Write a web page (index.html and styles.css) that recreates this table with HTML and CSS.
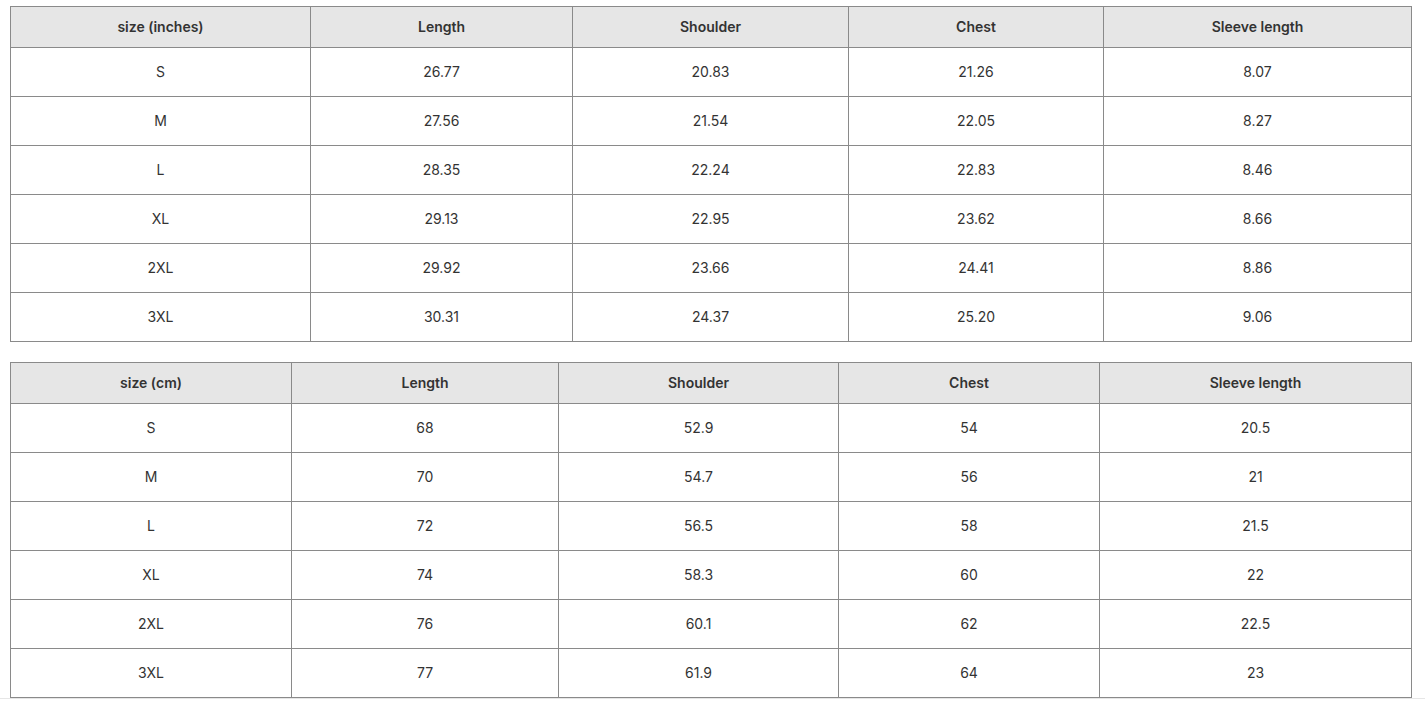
FILE: index.html
```html
<!DOCTYPE html>
<html>
<head>
<meta charset="utf-8">
<link rel="stylesheet" href="styles.css">
</head>
<body>
<div class="page">
  <table class="size-table">
    <colgroup>
      <col class="c1"><col class="c2"><col class="c3"><col class="c4"><col class="c5">
    </colgroup>
    <thead>
      <tr><th>size (inches)</th><th>Length</th><th>Shoulder</th><th>Chest</th><th>Sleeve length</th></tr>
    </thead>
    <tbody>
      <tr><td>S</td><td>26.77</td><td>20.83</td><td>21.26</td><td>8.07</td></tr>
      <tr><td>M</td><td>27.56</td><td>21.54</td><td>22.05</td><td>8.27</td></tr>
      <tr><td>L</td><td>28.35</td><td>22.24</td><td>22.83</td><td>8.46</td></tr>
      <tr><td>XL</td><td>29.13</td><td>22.95</td><td>23.62</td><td>8.66</td></tr>
      <tr><td>2XL</td><td>29.92</td><td>23.66</td><td>24.41</td><td>8.86</td></tr>
      <tr><td>3XL</td><td>30.31</td><td>24.37</td><td>25.20</td><td>9.06</td></tr>
    </tbody>
  </table>
  <table class="size-table cm">
    <colgroup>
      <col class="c1"><col class="c2"><col class="c3"><col class="c4"><col class="c5">
    </colgroup>
    <thead>
      <tr><th>size (cm)</th><th>Length</th><th>Shoulder</th><th>Chest</th><th>Sleeve length</th></tr>
    </thead>
    <tbody>
      <tr><td>S</td><td>68</td><td>52.9</td><td>54</td><td>20.5</td></tr>
      <tr><td>M</td><td>70</td><td>54.7</td><td>56</td><td>21</td></tr>
      <tr><td>L</td><td>72</td><td>56.5</td><td>58</td><td>21.5</td></tr>
      <tr><td>XL</td><td>74</td><td>58.3</td><td>60</td><td>22</td></tr>
      <tr><td>2XL</td><td>76</td><td>60.1</td><td>62</td><td>22.5</td></tr>
      <tr><td>3XL</td><td>77</td><td>61.9</td><td>64</td><td>23</td></tr>
    </tbody>
  </table>
</div>
</body>
</html>
```
FILE: styles.css
```css
html, body {
  margin: 0;
  padding: 0;
  background: #ffffff;
}
.page {
  padding: 6px 0 0 10px;
  display: flex;
  flex-direction: column;
  gap: 20px;
  align-items: flex-start;
  border-bottom: 1px solid #e6e6e6;
}
.size-table {
  border-collapse: collapse;
  table-layout: fixed;
  width: 1401px;
  font-family: Inter, "Liberation Sans", sans-serif;
  font-size: 14px;
  color: #333333;
}
.size-table th,
.size-table td {
  border: 1px solid #8a8a8a;
  text-align: center;
  padding: 0 0 2px 0;
  vertical-align: middle;
}
.size-table th {
  background: #e6e6e6;
  font-weight: 600;
  height: 38px;
}
.size-table td {
  height: 46px;
}
.size-table .c1 { width: 300px; }
.size-table .c2 { width: 262px; }
.size-table .c3 { width: 276px; }
.size-table .c4 { width: 255px; }
.size-table .c5 { width: 308px; }
.size-table.cm .c1 { width: 281px; }
.size-table.cm .c2 { width: 267px; }
.size-table.cm .c3 { width: 280px; }
.size-table.cm .c4 { width: 261px; }
.size-table.cm .c5 { width: 312px; }
```
